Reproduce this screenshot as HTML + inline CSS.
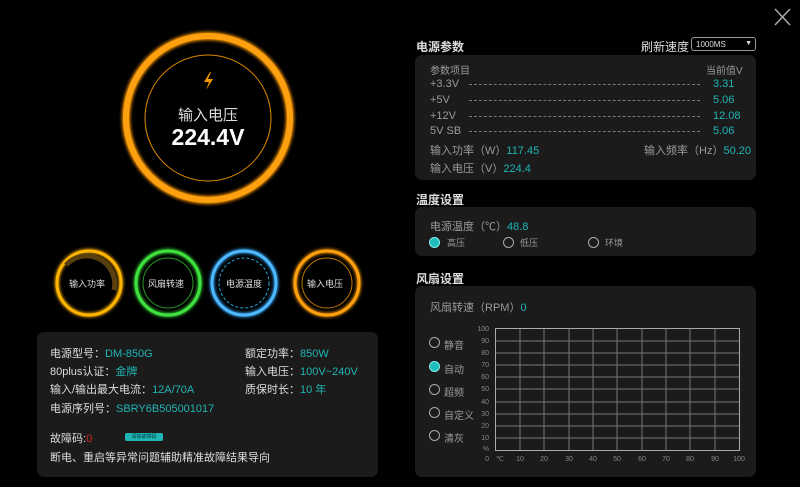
<!DOCTYPE html>
<html><head><meta charset="utf-8"><style>
*{margin:0;padding:0;box-sizing:border-box}
body{width:800px;height:487px;background:#000;font-family:"Liberation Sans","Noto Sans CJK SC",sans-serif;color:#ccc;position:relative;overflow:hidden}
.a{position:absolute;white-space:nowrap;z-index:3}
.p{position:absolute;background:#1b1b1b;border-radius:7px;z-index:0}
.c{color:#1fb5b5}
.t{font-size:11px;color:#9a9a9a}
.h{font-size:12px;font-weight:bold;color:#ddd}
.r{position:absolute;width:11px;height:11px;border:1.5px solid #aaa;border-radius:50%;z-index:3}
.r.on{background:#1fbcbc;border-color:#8ee}
.w{font-size:11px;color:#ddd}
</style></head><body>
<div class="p" style="left:37px;top:332px;width:341px;height:145px"></div>
<div class="p" style="left:415px;top:55px;width:341px;height:125px"></div>
<div class="p" style="left:415px;top:207px;width:341px;height:49px"></div>
<div class="p" style="left:415px;top:286px;width:341px;height:191px"></div>
<svg style="position:absolute;left:0;top:0;z-index:2" width="800" height="487">
<defs><filter id="g"><feGaussianBlur stdDeviation="1.5"/></filter></defs>
<circle cx="208" cy="118" r="82" fill="none" stroke="#ff9900" stroke-width="8" filter="url(#g)"/>
<circle cx="208" cy="118" r="82" fill="none" stroke="#ffa010" stroke-width="6"/>
<circle cx="208" cy="118" r="63" fill="none" stroke="#e08a00" stroke-width="1"/>
<path d="M210 72 L204 82 h5 l-3 8 l7 -11 h-5 l3 -7z" fill="#f39a00"/>
<circle cx="89" cy="283" r="32" fill="none" stroke="#ffb000" stroke-width="4" filter="url(#g)"/>
<circle cx="89" cy="283" r="32" fill="none" stroke="#ffb400" stroke-width="3"/>
<path d="M66 265 A28 28 0 0 1 114 290" fill="none" stroke="#5a400e" stroke-width="5"/>
<circle cx="168" cy="283" r="32" fill="none" stroke="#33dd33" stroke-width="4" filter="url(#g)"/>
<circle cx="168" cy="283" r="32" fill="none" stroke="#40e040" stroke-width="3"/>
<circle cx="168" cy="283" r="25" fill="none" stroke="#2a9a2a" stroke-width="1"/>
<circle cx="244" cy="283" r="32" fill="none" stroke="#33aaff" stroke-width="4" filter="url(#g)"/>
<circle cx="244" cy="283" r="32" fill="none" stroke="#50b8ff" stroke-width="3"/>
<circle cx="244" cy="283" r="25" fill="none" stroke="#2aa8d8" stroke-width="1" stroke-dasharray="3 2"/>
<circle cx="327" cy="283" r="32" fill="none" stroke="#ff9900" stroke-width="4" filter="url(#g)"/>
<circle cx="327" cy="283" r="32" fill="none" stroke="#ffa010" stroke-width="3"/>
<circle cx="327" cy="283" r="25" fill="none" stroke="#c07800" stroke-width="1"/>
<path d="M775 9 L790 25 M790 9 L775 25" stroke="#aaa" stroke-width="1.5"/>
<g stroke="#777" stroke-width="1" fill="none">
<path d="M520 329V450M544 329V450M569 329V450M593 329V450M617 329V450M642 329V450M666 329V450M690 329V450M715 329V450M496 341H739M496 353H739M496 365H739M496 377H739M496 389H739M496 402H739M496 414H739M496 426H739M496 438H739"/>
<rect x="495.5" y="328.5" width="244" height="122" stroke="#aaa"/>
</g>
<g font-size="7" fill="#888" font-family="Liberation Sans">
<text x="489" y="331" text-anchor="end">100</text><text x="489" y="343" text-anchor="end">90</text><text x="489" y="355" text-anchor="end">80</text><text x="489" y="367" text-anchor="end">70</text><text x="489" y="379" text-anchor="end">60</text><text x="489" y="391" text-anchor="end">50</text><text x="489" y="404" text-anchor="end">40</text><text x="489" y="416" text-anchor="end">30</text><text x="489" y="428" text-anchor="end">20</text><text x="489" y="440" text-anchor="end">10</text><text x="489" y="451" text-anchor="end">%</text>
<text x="489" y="461" text-anchor="end">0</text><text x="496" y="461">℃</text>
<text x="520" y="461" text-anchor="middle">10</text><text x="544" y="461" text-anchor="middle">20</text><text x="569" y="461" text-anchor="middle">30</text><text x="593" y="461" text-anchor="middle">40</text><text x="617" y="461" text-anchor="middle">50</text><text x="642" y="461" text-anchor="middle">60</text><text x="666" y="461" text-anchor="middle">70</text><text x="690" y="461" text-anchor="middle">80</text><text x="715" y="461" text-anchor="middle">90</text><text x="739" y="461" text-anchor="middle">100</text>
</g>
</svg>
<div class="a" style="left:0;width:416px;top:104px;text-align:center;font-size:15px;color:#ddd">输入电压</div>
<div class="a" style="left:0;width:416px;top:124px;text-align:center;font-size:23px;font-weight:bold;color:#fff">224.4V</div>
<div class="a" style="left:69px;top:277px;font-size:9px;color:#ddd">输入功率</div>
<div class="a" style="left:148px;top:277px;font-size:9px;color:#ddd">风扇转速</div>
<div class="a" style="left:226px;top:277px;font-size:9px;color:#ddd">电源温度</div>
<div class="a" style="left:307px;top:277px;font-size:9px;color:#ddd">输入电压</div>

<div class="a w" style="left:50px;top:345px">电源型号：<span class="c">DM-850G</span></div>
<div class="a w" style="left:50px;top:363px">80plus认证：<span class="c">金牌</span></div>
<div class="a w" style="left:50px;top:381px">输入/输出最大电流：<span class="c">12A/70A</span></div>
<div class="a w" style="left:50px;top:400px">电源序列号：<span class="c">SBRY6B505001017</span></div>
<div class="a w" style="left:245px;top:345px">额定功率：<span class="c">850W</span></div>
<div class="a w" style="left:245px;top:363px">输入电压：<span class="c">100V~240V</span></div>
<div class="a w" style="left:245px;top:381px">质保时长：<span class="c">10 年</span></div>
<div class="a w" style="left:50px;top:430px">故障码:<span style="color:#d22">0</span></div>
<div class="a" style="left:125px;top:433px;width:38px;height:8px;background:#1fb5b5;border-radius:2px;font-size:5px;color:#033;text-align:center;line-height:8px">清除故障码</div>
<div class="a w" style="left:50px;top:449px">断电、重启等异常问题辅助精准故障结果导向</div>

<div class="a h" style="left:416px;top:38px">电源参数</div>
<div class="a h" style="left:641px;top:38px;font-weight:normal">刷新速度</div>
<div class="a" style="left:691px;top:37px;width:65px;height:14px;border:1px solid #999;border-radius:3px;font-size:8px;color:#ddd;padding:2px 0 0 4px">1000MS<span style="position:absolute;right:3px;top:2px;font-size:7px">▼</span></div>
<div class="a t" style="left:430px;top:62px;font-size:10px">参数项目</div>
<div class="a t" style="left:706px;top:62px;font-size:10px">当前值V</div>
<div class="a t" style="left:430px;top:78px">+3.3V</div><div class="a t" style="left:430px;top:94px">+5V</div><div class="a t" style="left:430px;top:110px">+12V</div><div class="a t" style="left:430px;top:125px">5V SB</div>
<div class="a" style="left:469px;top:84px;width:231px;border-top:1px dashed #777"></div>
<div class="a" style="left:469px;top:100px;width:231px;border-top:1px dashed #777"></div>
<div class="a" style="left:469px;top:116px;width:231px;border-top:1px dashed #777"></div>
<div class="a" style="left:469px;top:131px;width:231px;border-top:1px dashed #777"></div>
<div class="a c" style="left:713px;top:78px;font-size:11px">3.31</div><div class="a c" style="left:713px;top:94px;font-size:11px">5.06</div><div class="a c" style="left:713px;top:110px;font-size:11px">12.08</div><div class="a c" style="left:713px;top:125px;font-size:11px">5.06</div>
<div class="a t" style="left:430px;top:142px">输入功率（W）<span class="c">117.45</span></div>
<div class="a t" style="left:644px;top:142px">输入频率（Hz）<span class="c">50.20</span></div>
<div class="a t" style="left:430px;top:160px">输入电压（V）<span class="c">224.4</span></div>

<div class="a h" style="left:416px;top:191px">温度设置</div>
<div class="a t" style="left:430px;top:218px">电源温度（℃）<span class="c">48.8</span></div>
<div class="r on" style="left:429px;top:237px"></div><div class="a t" style="left:447px;top:236px;font-size:9px">高压</div>
<div class="r" style="left:503px;top:237px"></div><div class="a t" style="left:520px;top:236px;font-size:9px">低压</div>
<div class="r" style="left:588px;top:237px"></div><div class="a t" style="left:605px;top:236px;font-size:9px">环境</div>

<div class="a h" style="left:416px;top:270px">风扇设置</div>
<div class="a t" style="left:430px;top:299px">风扇转速（RPM）<span class="c">0</span></div>
<div class="r" style="left:429px;top:337px"></div><div class="a t" style="left:444px;top:337px;font-size:10px">静音</div>
<div class="r on" style="left:429px;top:361px"></div><div class="a t" style="left:444px;top:361px;font-size:10px">自动</div>
<div class="r" style="left:429px;top:384px"></div><div class="a t" style="left:444px;top:384px;font-size:10px">超频</div>
<div class="r" style="left:429px;top:407px"></div><div class="a t" style="left:444px;top:407px;font-size:10px">自定义</div>
<div class="r" style="left:429px;top:430px"></div><div class="a t" style="left:444px;top:430px;font-size:10px">清灰</div>
</body></html>
